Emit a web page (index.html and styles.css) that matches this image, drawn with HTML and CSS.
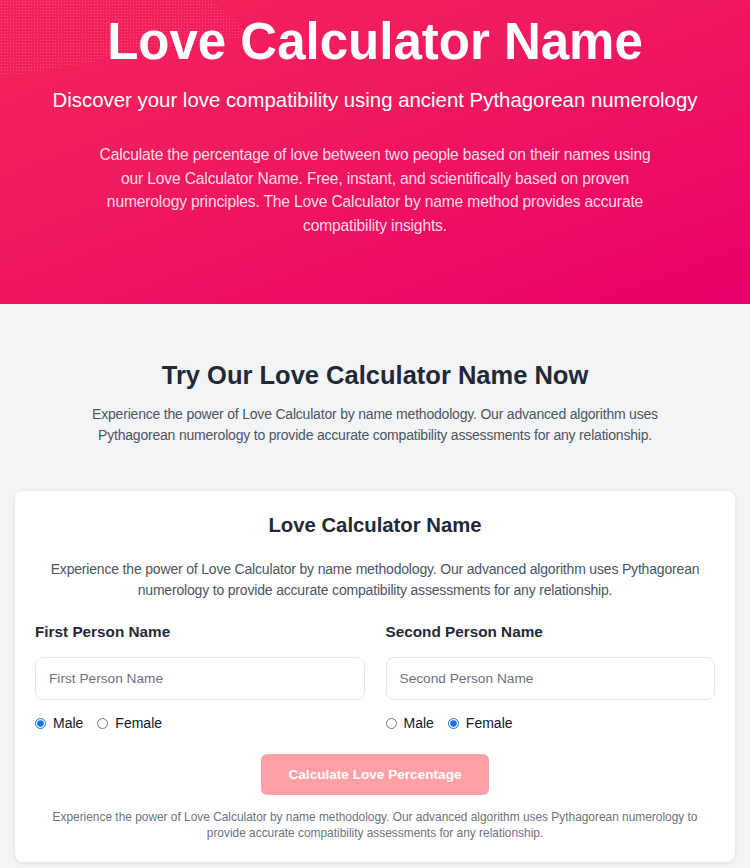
FILE: index.html
```html
<!DOCTYPE html>
<html lang="en">
<head>
<meta charset="utf-8">
<title>Love Calculator Name</title>
<link rel="stylesheet" href="styles.css">
</head>
<body>
<header class="hero">
  <div class="hero-dots"></div>
  <div class="hero-inner">
    <h1 class="hero-title">Love Calculator Name</h1>
    <p class="hero-sub">Discover your love compatibility using ancient Pythagorean numerology</p>
    <p class="hero-text">Calculate the percentage of love between two people based on their names using our Love Calculator Name. Free, instant, and scientifically based on proven numerology principles. The Love Calculator by name method provides accurate compatibility insights.</p>
  </div>
</header>
<main class="main">
  <section class="intro">
    <h2 class="intro-title">Try Our Love Calculator Name Now</h2>
    <p class="intro-text">Experience the power of Love Calculator by name methodology. Our advanced algorithm uses Pythagorean numerology to provide accurate compatibility assessments for any relationship.</p>
  </section>
  <section class="card">
    <h3 class="card-title">Love Calculator Name</h3>
    <p class="card-text">Experience the power of Love Calculator by name methodology. Our advanced algorithm uses Pythagorean numerology to provide accurate compatibility assessments for any relationship.</p>
    <div class="fields">
      <div class="field">
        <label class="field-label" for="p1">First Person Name</label>
        <input class="field-input" id="p1" type="text" placeholder="First Person Name">
        <div class="radios">
          <label class="radio"><input type="radio" name="g1" checked> Male</label>
          <label class="radio"><input type="radio" name="g1"> Female</label>
        </div>
      </div>
      <div class="field">
        <label class="field-label" for="p2">Second Person Name</label>
        <input class="field-input" id="p2" type="text" placeholder="Second Person Name">
        <div class="radios">
          <label class="radio"><input type="radio" name="g2"> Male</label>
          <label class="radio"><input type="radio" name="g2" checked> Female</label>
        </div>
      </div>
    </div>
    <div class="actions">
      <button class="calc-btn" type="button">Calculate Love Percentage</button>
    </div>
    <p class="card-foot">Experience the power of Love Calculator by name methodology. Our advanced algorithm uses Pythagorean numerology to provide accurate compatibility assessments for any relationship.</p>
  </section>
</main>
</body>
</html>
```
FILE: styles.css
```css
* { box-sizing: border-box; }
html, body { margin: 0; padding: 0; }
body {
  font-family: "Liberation Sans", Arial, sans-serif;
  background: #f3f4f6;
  color: #1f2937;
}
.hero {
  position: relative;
  overflow: hidden;
  height: 304px;
  background: linear-gradient(160deg, #f4245a 0%, #f01a5e 40%, #ea006a 100%);
  color: #fff;
  text-align: center;
}
.hero-dots {
  position: absolute;
  left: 0;
  top: 0;
  width: 245px;
  height: 88px;
  background-image: radial-gradient(rgba(255,255,255,0.2) 0.8px, transparent 1px);
  background-size: 3px 3px;
  clip-path: polygon(0 0, 86% 0, 98% 28%, 100% 42%, 45% 62%, 42% 68%, 12% 83%, 0 86%);
}
.hero-inner {
  position: relative;
  padding: 12px 40px 0;
}
.hero-title {
  margin: 0;
  font-size: 51px;
  line-height: 60px;
  font-weight: 700;
}
.hero-sub {
  margin: 14px 0 0;
  font-size: 20.4px;
  line-height: 28px;
}
.hero-text {
  margin: 29px auto 0;
  max-width: 560px;
  font-size: 15.6px;
  line-height: 23.7px;
  letter-spacing: -0.15px;
  color: rgba(255,255,255,0.86);
}
.main {
  padding: 54px 15px 6px;
}
.intro {
  text-align: center;
  padding: 0 20px;
}
.intro-title {
  margin: 0;
  font-size: 25.5px;
  line-height: 34px;
  font-weight: 700;
  color: #1f2937;
}
.intro-text {
  margin: 12px auto 0;
  max-width: 600px;
  font-size: 14px;
  line-height: 21px;
  letter-spacing: -0.2px;
  color: #4b5563;
}
.card {
  margin-top: 45px;
  background: #fff;
  border-radius: 8px;
  box-shadow: 0 1px 4px rgba(0,0,0,0.1);
  padding: 22px 20px 21px;
}
.card-title {
  margin: 0;
  text-align: center;
  font-size: 20.3px;
  line-height: 24px;
  font-weight: 700;
  color: #1f2937;
}
.card-text {
  margin: 22px auto 0;
  text-align: center;
  font-size: 14px;
  line-height: 21px;
  letter-spacing: -0.18px;
  color: #4b5563;
  max-width: 680px;
}
.fields {
  margin-top: 21px;
  display: grid;
  grid-template-columns: 1fr 1fr;
  gap: 21px;
}
.field {
  display: flex;
  flex-direction: column;
}
.field-label {
  font-size: 15.3px;
  line-height: 20px;
  font-weight: 700;
  color: #1f2937;
}
.field-input {
  margin-top: 15px;
  height: 43px;
  border: 1px solid #e5e7eb;
  border-radius: 8px;
  padding: 0 13px;
  font-family: inherit;
  font-size: 13.7px;
  color: #1f2937;
  background: #fff;
  outline: none;
}
.field-input::placeholder { color: #6b7280; }
.radios {
  margin-top: 12px;
  display: flex;
  gap: 14px;
}
.radio {
  display: flex;
  align-items: center;
  gap: 7px;
  font-size: 14px;
  line-height: 22px;
  color: #111827;
}
.radio input {
  margin: 0;
  width: 11px;
  height: 11px;
  accent-color: #1a73e8;
}
.actions {
  margin-top: 20px;
  display: flex;
  justify-content: center;
}
.calc-btn {
  width: 228px;
  height: 41px;
  border: none;
  border-radius: 6px;
  background: #ffa0a5;
  color: #fff;
  font-family: inherit;
  font-size: 13.6px;
  font-weight: 700;
}
.card-foot {
  margin: 14px auto 0;
  text-align: center;
  font-size: 11.9px;
  line-height: 16px;
  color: #6b7280;
  max-width: 660px;
}
```
